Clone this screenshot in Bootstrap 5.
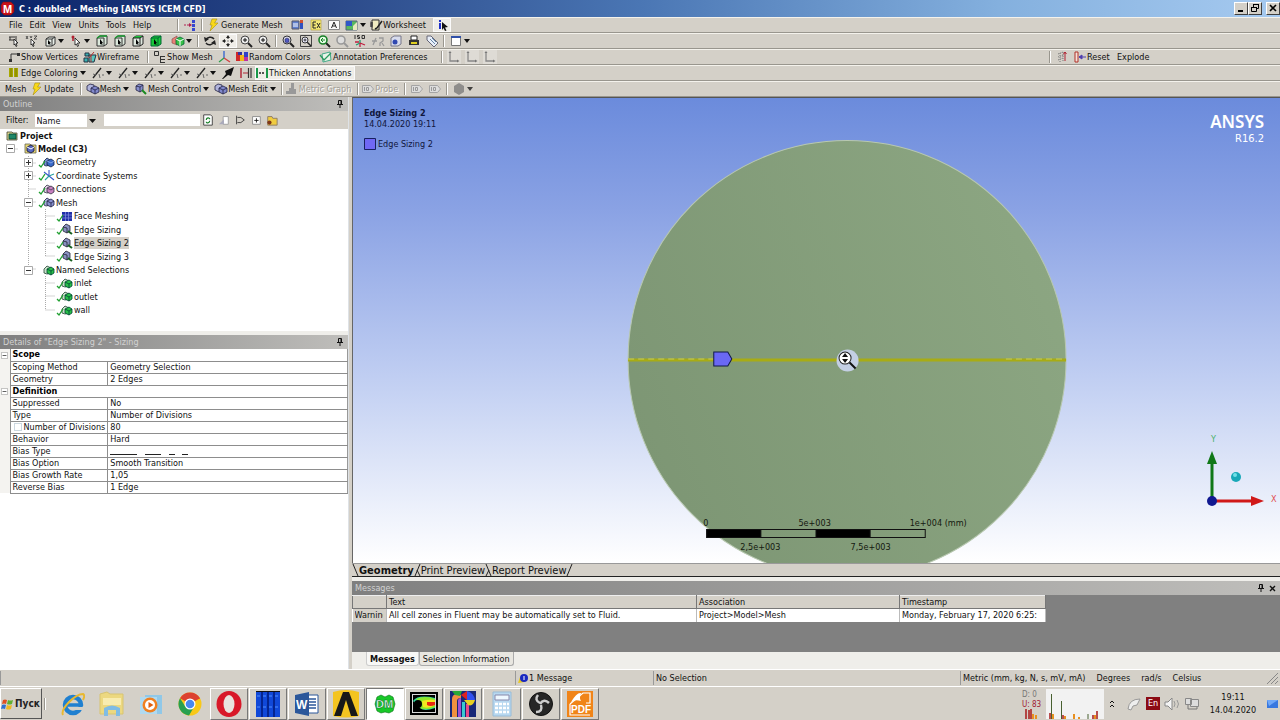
<!DOCTYPE html>
<html lang="en">
<head>
<meta charset="utf-8">
<meta name="viewport" content="width=device-width, initial-scale=1">
<title>C : doubled - Meshing [ANSYS ICEM CFD]</title>
<link href="https://cdn.jsdelivr.net/npm/bootstrap@5.3.0/dist/css/bootstrap.min.css" rel="stylesheet">
<style>
:root { --face:#d4d0c8; --ink:#111; --ui:"DejaVu Sans Condensed","Liberation Sans",sans-serif; }
body { font-family:var(--ui); font-size:9px; line-height:12px; color:var(--ink); background:var(--face); min-height:100vh; }
button, input, select { font:inherit; color:inherit; }
button { background:none; border:0; padding:0; white-space:nowrap; }
b, th, .fw-bold { font-weight:700; }
svg { display:block; flex:none; }
.toolrow, .titlebar, .status, .task { flex:none; }

.titlebar { height:17px; background:linear-gradient(90deg,#0a246a 0,#2a4888 25%,#4a76b4 50%,#84b0de 78%,#a6caf0 100%); color:#fff; font-weight:700; }
.winbtn { width:14px; height:13px; background:var(--face); border:1px solid; border-color:#fff #404040 #404040 #fff; color:#000; }

.toolrow { height:16px; border-top:1px solid #f4f2ec; border-bottom:1px solid #99968e; padding-left:5px; }
.tool { display:flex; align-items:center; height:14px; }
.tool > svg { margin:0 2px; }
.tool.drop::after { content:""; border:3px solid transparent; border-top:4px solid #111; border-bottom:0; margin:0 3px 0 2px; }
.tool.drop-tight::after { margin-left:-1px; }
.tool.down { background:#efede8; outline:1px solid #fafafa; outline-offset:-1px; }
.tool:disabled { color:#a09d95; text-shadow:1px 1px #fff; }
.rule-v { width:2px; height:12px; border-left:1px solid #99968e; border-right:1px solid #fff; margin:0 2px; flex:none; }
.menu { gap:7px; width:170px; padding-left:4px; }
.cw-42 { width:42px; } .cw-64 { width:64px; } .cw-76 { width:76px; } .cw-84 { width:84px; } .cw-100 { width:100px; } .cw-122 { width:122px; } .cw-163 { width:163px; }

.side { flex:0 0 349px; }
.panel-head { height:14px; color:#d2d2d2; background:linear-gradient(90deg,#7f7f7f,#bfbebb); padding:0 4px 0 3px; }
.outline { height:234px; }
.filter { height:18px; background:var(--face); padding-left:6px; }
.filter select { width:64px; height:13px; border:0; background:#fff; appearance:none; padding:1px 2px; line-height:12px; }
.filter input { width:96px; height:12px; border:0; background:#fff; padding:0; margin-left:5px; }
.pick { width:64px; margin-left:6px; }
.pick svg { position:absolute; right:0; top:0; pointer-events:none; }
.tree { height:188px; }
.tree-lines { position:absolute; left:0; top:0; }
.tree-row { height:13px; }
.lv0 { padding-left:2px; } .lv1 { padding-left:6px; } .lv2 { padding-left:24px; } .lv3 { padding-left:42px; }
.twist { width:14px; flex:none; }
.twist button { display:block; width:9px; height:9px; background:#fff; }
.picked { background:#d4d0c8; }

.props { width:100%; border-collapse:collapse; background:#fff; border-right:1px solid #999; }
.props td, .props th { height:12px; line-height:11px; padding:0 2px; border-bottom:1px solid #8d8d8d; white-space:nowrap; }
.props .gut { width:10px; padding:0; border-bottom:0; border-right:1px solid #8d8d8d; background:#f4f3f0; }
.props .nm { width:96px; border-right:1px solid #8d8d8d; }
.props th { color:#000; }
.props input { appearance:none; width:8px; height:8px; border:1px solid #ccd8e0; background:#fff; margin:0 2px 0 1px; vertical-align:-1px; }
.gut button { display:block; width:7px; height:7px; margin:2px 1px; }

.work { min-width:0; margin-left:3px; }
.scene { background:linear-gradient(180deg,#6b8bdc 0,#8aa2e4 24%,#c0cef2 60%,#fff 100%); border-left:1px solid #666; border-top:1px solid #555; min-height:200px; }
.scene > svg.model { position:absolute; inset:0; width:100%; height:100%; }
.scene > svg.triad { position:absolute; right:0; bottom:44px; width:76px; height:80px; overflow:visible; }
.over { position:absolute; color:#10163c; }
.cap { left:11px; top:10px; line-height:11px; }
.legend { gap:2px; }
.brand { right:16px; top:14px; color:#fff; text-align:right; }
.brand div { font:600 17px/20px "Noto Sans","Open Sans",sans-serif; }
.brand small { display:block; font:11px/13px "DejaVu Sans Condensed",sans-serif; }
.viewtabs { height:14px; border-top:1px solid #999; border-bottom:1px solid #222; font-size:11px; }
.viewtabs button { height:13px; line-height:13px; flex:none; }
.msgs { height:71px; background:#808080; }
.msgs table { border-collapse:collapse; background:#fff; table-layout:fixed; width:693px; }
.msgs th { background:var(--face); font-weight:400; height:13px; border:1px solid #777; border-top-color:#eee; padding:0 2px; }
.msgs td { height:13px; padding:0 2px; border-right:1px solid #bbb; white-space:nowrap; overflow:hidden; }
.msgs td.rowh { background:var(--face); }
.clip { width:28px; overflow:hidden; }
.msgtabs { height:17px; background:#efeeea; padding-left:14px; }
.msgtabs button { height:14px; background:#e8e6e0; border:1px solid #aaa; border-top:0; border-radius:0 0 3px 3px; padding:0 3px; line-height:14px; flex:none; }
.msgtabs .cur { background:#f8f8f6; border-color:#ccc; }
.splitter { background:#efeeea; }
.status { height:17px; border-top:1px solid #fff; }
.status > div { border-left:1px solid #999; padding:0 2px; height:14px; line-height:14px; }
.stat-m { width:138px; } .stat-s { width:307px; } .stat-u { width:320px; gap:11px; }
.task { height:34px; border-top:1px solid #fff; }
.start { width:42px; height:31px; font-size:10px; font-weight:700; color:#222; border:1px solid; border-color:#fff #555 #555 #fff; }
.app { width:38px; height:32px; border:1px solid transparent; margin-right:1px; display:flex; align-items:center; justify-content:center; flex:none; }
.app.run { border-color:#fff #777 #777 #fff; }
.app.act { background:#fff; border-color:#777 #fff #fff #777; }
.lang { width:14px; height:13px; background:#8c0b14; color:#fff; text-align:center; line-height:13px; }
.netmon { width:86px; height:30px; }
.clock { width:66px; line-height:13px; }
</style>
</head>
<body class="d-flex flex-column overflow-hidden">

<svg width="0" height="0" class="position-absolute" aria-hidden="true">
  <defs>
    <symbol id="bolt" viewBox="0 0 14 14"><path d="M5 1h5L7.500 5H11L3 13l2-6H3z" fill="#f8d818" stroke="#a89010" stroke-width=".6"/></symbol>
    <symbol id="cube" viewBox="0 0 14 14"><path d="M3 5l3-2h6v7l-3 2H3z" fill="#e8eee8" stroke="#333"/><path d="M3 5h6v7M9 5l3-2" fill="none" stroke="#333"/><path d="M5 6l3 3-1 .3.6 1.500-.8.3L6.200 9.700 5 10.500z" fill="#000"/></symbol>
    <symbol id="cubeg" viewBox="0 0 14 14"><path d="M2 4l3-2h7v8l-3 2H2z" fill="#dce8dc" stroke="#333"/><path d="M2 4h7v8" fill="none" stroke="#333"/><path d="M2 4l3-2h7" fill="none" stroke="#1a9a30" stroke-width="1.300"/><path d="M5 5l3 4-1 .3.6 1.500-.8.3L6.200 9.700 5 10.500z" fill="#000"/></symbol>
    <symbol id="cubef" viewBox="0 0 14 14"><path d="M2 4l3-2h7v8l-3 2H2z" fill="#18c838" stroke="#063"/><path d="M2 4h7v8M9 4l3-2" fill="none" stroke="#063"/><path d="M5 5l3 4-1 .3.6 1.500-.8.3L6.200 9.700 5 10.500z" fill="#000"/></symbol>
    <symbol id="cubet" viewBox="0 0 14 14"><path d="M2 4l3-2h7v8l-3 2H2z" fill="#dfe8df" stroke="#222"/><path d="M2 4l3-2h7L9 4z" fill="#18c838"/><path d="M2 4h7v8M9 4l3-2" fill="none" stroke="#222"/><path d="M5 5l3 4-1 .3.6 1.500-.8.3L6.200 9.700 5 10.500z" fill="#000"/></symbol>
    <symbol id="mesh" viewBox="0 0 14 14"><path d="M1 4l3-2 4 1v5l-3 2-4-2z" fill="#b0b4dc" stroke="#224" stroke-width=".8"/><path d="M5 6l4-2 4 2v4l-4 2-4-2z" fill="#8088cc" stroke="#224" stroke-width=".8"/><path d="M5 6l4 2 4-2M9 8v4" stroke="#224" stroke-width=".8" fill="none"/></symbol>
    <symbol id="meshc" viewBox="0 0 14 14"><path d="M2 4l3-2 4 1v5l-3 2-4-2z" fill="#8890cc" stroke="#224" stroke-width=".8"/><path d="M2 4l4 1v5M6 5l3-2" stroke="#224" stroke-width=".8" fill="none"/><path d="M8 8l4 4" stroke="#1a8a20" stroke-width="2"/></symbol>
    <symbol id="rgcube" viewBox="0 0 14 14"><path d="M1 5l5-3v9l-5-2z" fill="#e88078" stroke="#844" stroke-width=".6"/><path d="M5 5l4-2 4 2v5l-4 2-4-2z" fill="#38c048" stroke="#063" stroke-width=".8"/><path d="M5 5l4 2 4-2M9 7v5" stroke="#fff" fill="none"/></symbol>
    <symbol id="ptr1" viewBox="0 0 14 14"><path d="M2 3h8M2 6h5M9 4v4M3 3v3" stroke="#333" fill="none"/><path d="M7 5l4 4H9l1 3-1 .5L8 10l-1 1z" fill="#fff" stroke="#111" stroke-width=".8"/></symbol>
    <symbol id="ptr2" viewBox="0 0 14 14"><path d="M1 2l2 3M3 2L1 5M5 2l1 2 1-2M9 2h3L9 5h3" stroke="#333" fill="none" stroke-width=".8"/><path d="M6 5l4 4H8l1 3-1 .5L7 10l-1 1z" fill="#fff" stroke="#111" stroke-width=".8"/></symbol>
    <symbol id="ptr3" viewBox="0 0 14 14"><path d="M4 2v5" stroke="#b02030" stroke-width="1.500"/><circle cx="4" cy="3" r="1.500" fill="#b02030"/><path d="M6 4l5 5H8.500l1 3-1 .5L7.500 10 6 11z" fill="#fff" stroke="#111" stroke-width=".8"/></symbol>
    <symbol id="rot" viewBox="0 0 14 14"><path d="M3 6c1-3 6-4 8-1M11 8c-1 3-6 4-8 1" fill="none" stroke="#222" stroke-width="1.400"/><path d="M1 3l1 5 4-3zM13 11l-1-5-4 3z" fill="#222"/></symbol>
    <symbol id="pan" viewBox="0 0 14 14"><path d="M7 1l2 3H5zM7 13l2-3H5zM1 7l3-2v4zM13 7l-3-2v4z" fill="#222"/><path d="M7 4v1M7 9v1M4 7h1M9 7h1M6.500 7h1" stroke="#222"/></symbol>
    <symbol id="mag" viewBox="0 0 14 14"><path d="M9 9l4 4" stroke="#222" stroke-width="2"/><circle cx="6" cy="6" r="4" fill="#eee" stroke="#444"/><path d="M4 6h4M6 4v4" stroke="#111"/></symbol>
    <symbol id="magb" viewBox="0 0 14 14"><path d="M9 9l4 4" stroke="#222" stroke-width="2"/><circle cx="6" cy="6" r="4" fill="#dde" stroke="#333"/><path d="M4 5l2-1 2 1v3L6 9 4 8z" fill="#5058c0" stroke="#224" stroke-width=".5"/></symbol>
    <symbol id="magr" viewBox="0 0 14 14"><path d="M1.500 1.500h11v11h-11z" fill="none" stroke="#444"/><path d="M8 8l4 4" stroke="#222" stroke-width="1.500"/><circle cx="6" cy="6" r="3" fill="#eef" stroke="#333"/><path d="M4.500 6h3M6 4.500v3" stroke="#111" stroke-width=".8"/></symbol>
    <symbol id="magg" viewBox="0 0 14 14"><path d="M9 9l4 4" stroke="#222" stroke-width="2"/><circle cx="6" cy="6" r="4" fill="#e8ffe8" stroke="#188028" stroke-width="1.600"/><path d="M4 6h4M4 6l2-2M4 6l2 2" stroke="#188028"/></symbol>
    <symbol id="magx" viewBox="0 0 14 14"><path d="M9 9l4 4" stroke="#999" stroke-width="2"/><circle cx="6" cy="6" r="4" fill="#ddd" stroke="#999" stroke-width="1.600"/></symbol>
    <symbol id="iso" viewBox="0 0 14 14"><path d="M2 1v4M6.500 1.500H4.500v1.500h2v1.500h-2M9 1.500h2.500v3H9z" fill="none" stroke="#222" stroke-width=".9"/><path d="M7 9V6M7 9l-4 2" stroke="#18a070" stroke-width="1.300" fill="none"/><path d="M7 9l5 2M7 9v4M2 8h4" stroke="#c02040" stroke-width="1.300"/></symbol>
    <symbol id="look" viewBox="0 0 14 14"><path d="M2 11l3-7M1 7h5M8 4h4v3L9 9v3M11 9l2 3" fill="none" stroke="#999" stroke-width="1.300"/></symbol>
    <symbol id="box3" viewBox="0 0 14 14"><path d="M2 4l3-2h7v8l-3 2H2z" fill="#d8dcec" stroke="#778"/><circle cx="6" cy="8" r="2.500" fill="#3048b0"/></symbol>
    <symbol id="prn" viewBox="0 0 14 14"><path d="M4 2h6v4H4z" fill="#fff" stroke="#222"/><path d="M2 6h10v5H2z" fill="#333"/><path d="M4 8h6v2H4z" fill="#e0d020"/></symbol>
    <symbol id="tag" viewBox="0 0 14 14"><path d="M2 2l4 0 7 7-4 4-7-7z" fill="#e8eef8" stroke="#667"/><path d="M5 5l5 5M7 4l4 4" stroke="#68a"/></symbol>
    <symbol id="win" viewBox="0 0 14 14"><path d="M2.500 2.500h9v9h-9z" fill="#fff" stroke="#777"/><path d="M2 2h10v2H2z" fill="#3050a8"/></symbol>
    <symbol id="conn" viewBox="0 0 14 14"><path d="M1 7h6" stroke="#b02050" stroke-dasharray="2 1"/><path d="M6 5l3 2-3 2z" fill="#b02050"/><path d="M9 2h3v3H9zM9 6h3v3H9zM9 10h3v3H9z" fill="#3848d0"/></symbol>
    <symbol id="sheet" viewBox="0 0 14 14"><path d="M1 3h7v8H1z" fill="#6080d0" stroke="#556"/><path d="M2 6h5M2 8h5" stroke="#fff"/><path d="M9 2h3v9H9z" fill="#3050c0"/><path d="M9 2h3v3H9z" fill="#d05030"/></symbol>
    <symbol id="exc" viewBox="0 0 14 14"><path d="M2 2h10v10H2z" fill="#f4e878" stroke="#b8a840" stroke-width=".7"/><path d="M7 4H4v6h3M4 7h2.500M8 5l3 5M11 5l-3 5" stroke="#222" fill="none"/></symbol>
    <symbol id="note" viewBox="0 0 14 14"><path d="M1.500 2.500h11v9h-11z" fill="#fafafa" stroke="#888"/><path d="M4.500 10L7 4l2.500 6M5.500 8h3" fill="none" stroke="#222"/></symbol>
    <symbol id="pic" viewBox="0 0 14 14"><path d="M1 3h11v9H1z" fill="#58b860" stroke="#567"/><path d="M1 3h6v5H1z" fill="#3058c8"/><path d="M8 8l4-4v8H8z" fill="#e8e8c0"/></symbol>
    <symbol id="wsheet" viewBox="0 0 14 14"><path d="M3 2h7v10H3z" fill="#f0ecc0" stroke="#333"/><path d="M13 3L8 10l-2 1" stroke="#222" stroke-width="1.500" fill="none"/><path d="M1 4l3 1-3 1 3 1-3 1 3 1" stroke="#333" fill="none" stroke-width=".8"/></symbol>
    <symbol id="info" viewBox="0 0 14 14"><path d="M4 2h2v2H4zM4 5h2v6H4z" fill="#2030c8"/><path d="M7 4l6 5-3 .5 1.500 3-1.500.5-1.500-3L7 12z" fill="#111"/></symbol>
    <symbol id="vert" viewBox="0 0 14 14"><path d="M4 10V4h7" fill="none" stroke="#333"/><path d="M2 9h3v3H2zM10 3h3v3h-3z" fill="#333"/></symbol>
    <symbol id="wire" viewBox="0 0 14 14"><path d="M2 3h4v3H2zM1 8h4v4H1z" fill="#38b0b0" stroke="#234"/><path d="M6 5h7l-2 7H6z" fill="#58c8c0" stroke="#234"/><path d="M8 5v7M11 2L6 8" stroke="#b03030"/></symbol>
    <symbol id="smesh" viewBox="0 0 14 14"><path d="M1.500 1.500h4v4h-4zM7 6.500h5M7 9.500h5M7 12.500h5M7.500 6v6" fill="none" stroke="#333"/></symbol>
    <symbol id="axes" viewBox="0 0 14 14"><path d="M7 8V1" stroke="#3060d0" stroke-width="1.300"/><path d="M7 8l-5 4" stroke="#28a048" stroke-width="1.300"/><path d="M7 8l6 4" stroke="#d04040" stroke-width="1.300"/></symbol>
    <symbol id="rnd" viewBox="0 0 14 14"><path d="M1 2h4v9H1z" fill="#d02828"/><path d="M5 5h4v6H5z" fill="#f0b818"/><path d="M9 2h4v5H9z" fill="#3040c8"/><path d="M9 7h4v4H9z" fill="#c030a0"/><path d="M3 2h4v3H3z" fill="#3030a0"/></symbol>
    <symbol id="anno" viewBox="0 0 14 14"><path d="M3 4l8-2 1 8-8 2z" fill="#e8f4e8" stroke="#4a8"/><path d="M1 5l4 5 7-7" fill="none" stroke="#2a9a60" stroke-width="1.300"/></symbol>
    <symbol id="ax2" viewBox="0 0 14 14"><path d="M0 0h14v14H0z" fill="#dedbd5"/><path d="M3 2v9h8" fill="none" stroke="#888" stroke-width="1.300"/><path d="M1.500 3L3 1l1.500 2zM10 9.500l2.500 1.500L10 12.500z" fill="#777"/></symbol>
    <symbol id="expl" viewBox="0 0 14 14"><path d="M3 4l5-2M3 7l6-2M3 10l5-2M5 3v9M8 2v9" stroke="#777" stroke-dasharray="1 1"/><path d="M10 2v9M8.500 4L10 2l1.500 2" stroke="#b02030" fill="none"/></symbol>
    <symbol id="reset" viewBox="0 0 14 14"><path d="M2 2h3v10H2z" fill="#f4e0d8" stroke="#b03028"/><path d="M6 7h7M6 7l3-2v4z" stroke="#5040b0" fill="#5040b0"/></symbol>
    <symbol id="ecol" viewBox="0 0 14 14"><path d="M2 2h4v9H2zM7 2h4v9H7z" fill="#a8a800"/><path d="M9 2v9M4 2v9" stroke="#7c7c00"/></symbol>
    <symbol id="edge" viewBox="0 0 14 14"><path d="M2 12L10 2" stroke="#222" stroke-width="1.300"/><path d="M2 8l3 1M8 8l1 4M11 9h2" fill="none" stroke="#666"/></symbol>
    <symbol id="barrow" viewBox="0 0 14 14"><path d="M1 13l4-5-1-3 9-4-3 9-3-1-5 4z" fill="#111"/></symbol>
    <symbol id="thk" viewBox="0 0 14 14"><path d="M2 2v10" stroke="#b02838" stroke-width="1.500"/><path d="M4 7h5" stroke="#b02838"/><path d="M9.500 2v10M12 2v10" stroke="#333" stroke-width="1.200"/></symbol>
    <symbol id="thkg" viewBox="0 0 14 14"><path d="M2 2v10M12 2v10" stroke="#189848" stroke-width="2"/><path d="M4 7h6" stroke="#222" stroke-dasharray="2 1" stroke-width="1.500"/></symbol>
    <symbol id="graph" viewBox="0 0 14 14"><path d="M1 12v-3h3V6h2V1h3v6h2v5z" fill="#999"/></symbol>
    <symbol id="probe" viewBox="0 0 14 14"><path d="M1.500 3.500h8l3 3.500-3 3.500h-8z" fill="#ddd" stroke="#a4a4a4"/><path d="M3.500 5v4M5.500 5.500h2v3h-2z" stroke="#999" fill="none"/></symbol>
    <symbol id="hex" viewBox="0 0 14 14"><path d="M7 1l5 3v6l-5 3-5-3V4z" fill="#777"/></symbol>
    <symbol id="pin" viewBox="0 0 8 8"><path d="M2.500.5h3v4h-3zM1 4.500h6M4 5v3" stroke="#111" fill="none"/><path d="M4.500 1h1v3h-1z" fill="#111"/></symbol>
    <symbol id="plus" viewBox="0 0 9 9"><path d="M.5.5h8v8h-8z" fill="#fff" stroke="#aaa"/><path d="M2 4.500h5M4.500 2v5" stroke="#333"/></symbol>
    <symbol id="minus" viewBox="0 0 9 9"><path d="M.5.5h8v8h-8z" fill="#fff" stroke="#aaa"/><path d="M2 4.500h5" stroke="#333"/></symbol>
    <symbol id="t-proj" viewBox="0 0 18 13"><path d="M5 3h5l1 1h4v7H5z" fill="#e0d890" stroke="#443" stroke-width=".8"/><path d="M7 5h7v5H7z" fill="#208868" stroke="#043" stroke-width=".8"/></symbol>
    <symbol id="t-model" viewBox="0 0 18 13"><path d="M5 2h5l1 1h5v8H5z" fill="#e8d870" stroke="#665" stroke-width=".8"/><path d="M7 5l4-2 3 2v4l-3 2-4-2z" fill="#5868c0" stroke="#113" stroke-width=".8"/><path d="M7 5l4 2 3-2" stroke="#fff" fill="none"/></symbol>
    <symbol id="tick" viewBox="0 0 18 13"><path d="M1 9l2 2 4-6" stroke="#20a030" stroke-width="1.300" fill="none"/></symbol>
    <symbol id="t-geo" viewBox="0 0 18 13"><path d="M6 5l3-3 3 2v5l-4 1-2-1z" fill="#7890d0" stroke="#124" stroke-width=".8"/><path d="M9 5l4-2 3 2v4l-3 2-4-2z" fill="#3868c8" stroke="#124" stroke-width=".8"/><path d="M9 5l4 2 3-2" stroke="#a8c0f0" stroke-width=".7" fill="none"/><use href="#tick"/></symbol>
    <symbol id="t-cs" viewBox="0 0 18 13"><path d="M11 7V1M11 7l5 4M11 7L6 3" stroke="#3858c8" stroke-width="1.100"/><path d="M11 7l-4 4M11 7l5-2" stroke="#28a0a0" stroke-width="1.100"/><use href="#tick"/></symbol>
    <symbol id="t-con" viewBox="0 0 18 13"><path d="M6 5l3-3 4 2v5l-4 1-3-1z" fill="#e0d0e4" stroke="#334" stroke-width=".8"/><path d="M9 5l4-2 3 2v4l-3 2-4-2z" fill="#c880c0" stroke="#334" stroke-width=".8"/><path d="M9 5l4 2 3-2" stroke="#334" stroke-width=".7" fill="none"/><use href="#tick"/></symbol>
    <symbol id="t-mesh" viewBox="0 0 18 13"><path d="M6 5l3-3 3 2v5l-4 1-2-1z" fill="#a8b0d8" stroke="#224" stroke-width=".8"/><path d="M9 5l4-2 3 2v4l-3 2-4-2z" fill="#8890d0" stroke="#224" stroke-width=".8"/><path d="M9 5l4 2 3-2M13 7v4" stroke="#224" stroke-width=".8" fill="none"/><use href="#tick"/></symbol>
    <symbol id="t-face" viewBox="0 0 18 13"><path d="M6 2h10v9H6z" fill="#2030a8"/><path d="M9.500 2v9M12.500 2v9M6 5h10M6 8h10" stroke="#8890e0" stroke-width=".7"/><use href="#tick"/></symbol>
    <symbol id="t-edge" viewBox="0 0 18 13"><path d="M7 4l3-3 4 2v5l-3 2-4-2z" fill="#8890c0" stroke="#223" stroke-width=".8"/><path d="M7 4l4 1v5" stroke="#223" stroke-width=".8" fill="none"/><path d="M12 8l4 3" stroke="#186020" stroke-width="2"/><use href="#tick"/></symbol>
    <symbol id="t-ns" viewBox="0 0 18 13"><path d="M6 5l3-3 4 2v5l-4 1-3-1z" fill="#c8e0c8" stroke="#243" stroke-width=".8"/><path d="M9 5l4-2 3 2v4l-3 2-4-2z" fill="#28c048" stroke="#043" stroke-width=".8"/><path d="M9 5l4 2 3-2M13 7v4" stroke="#043" stroke-width=".8" fill="none"/></symbol>
    <symbol id="t-nsc" viewBox="0 0 18 13"><use href="#t-ns"/><use href="#tick"/></symbol>
  </defs>
</svg>

<header class="titlebar d-flex align-items-center">
  <svg width="15" height="15" viewBox="0 0 15 15"><path d="M3 1h8l3 3v7l-3 3H4l-3-3V4z" fill="#c81018" stroke="#701018" stroke-width=".6"/><text x="3" y="12" font-family="Liberation Sans, sans-serif" font-size="11" font-weight="700" fill="#fff">M</text></svg>
  <span class="px-1 flex-grow-1">C : doubled - Meshing [ANSYS ICEM CFD]</span>
  <button class="winbtn" aria-label="Minimize"><svg width="12" height="11" viewBox="0 0 12 11"><path d="M3 8h5" stroke="#000" stroke-width="2"/></svg></button>
  <button class="winbtn" aria-label="Restore"><svg width="12" height="11" viewBox="0 0 12 11"><path d="M4.500 4V1.500h5v4H8M2.500 4.500h5v4h-5zM2 4.500h6M4 1.500h6" fill="none" stroke="#000"/></svg></button>
  <button class="winbtn ms-1" aria-label="Close"><svg width="12" height="11" viewBox="0 0 12 11"><path d="M3 2l6 6M9 2L3 8" stroke="#000" stroke-width="1.600"/></svg></button>
</header>

<nav class="toolrow d-flex align-items-center" aria-label="Menu">
  <div class="menu d-flex">
    <button>File</button><button>Edit</button><button>View</button><button>Units</button><button>Tools</button><button>Help</button>
  </div>
  <span class="rule-v"></span>
  <button class="tool" aria-label="Connect"><svg width="14" height="14"><use href="#conn"/></svg></button>
  <span class="rule-v"></span>
  <button class="tool cw-84"><svg width="14" height="14" class="me-0"><use href="#bolt"/></svg>Generate Mesh</button>
  <button class="tool" aria-label="Sheet"><svg width="14" height="14"><use href="#sheet"/></svg></button>
  <button class="tool" aria-label="Comment"><svg width="14" height="14"><use href="#exc"/></svg></button>
  <button class="tool" aria-label="Note"><svg width="14" height="14"><use href="#note"/></svg></button>
  <button class="tool drop drop-tight" aria-label="Image"><svg width="14" height="14"><use href="#pic"/></svg></button>
  <button class="tool cw-64"><svg width="14" height="14" class="mx-0"><use href="#wsheet"/></svg>Worksheet</button>
  <button class="tool down" aria-label="Selection information"><svg width="14" height="14"><use href="#info"/></svg></button>
</nav>

<div class="toolrow d-flex align-items-center" role="toolbar" aria-label="Graphics">
  <button class="tool" aria-label="Label"><svg width="14" height="14"><use href="#ptr1"/></svg></button>
  <button class="tool" aria-label="Coordinates"><svg width="14" height="14"><use href="#ptr2"/></svg></button>
  <button class="tool drop drop-tight" aria-label="Select type"><svg width="14" height="14"><use href="#cube"/></svg></button>
  <button class="tool drop drop-tight" aria-label="Select mode"><svg width="14" height="14"><use href="#ptr3"/></svg></button>
  <button class="tool" aria-label="Vertex"><svg width="14" height="14"><use href="#cubeg"/></svg></button>
  <button class="tool" aria-label="Edge"><svg width="14" height="14"><use href="#cubeg"/></svg></button>
  <button class="tool" aria-label="Face"><svg width="14" height="14"><use href="#cubet"/></svg></button>
  <button class="tool me-1" aria-label="Body"><svg width="14" height="14"><use href="#cubef"/></svg></button>
  <button class="tool drop drop-tight" aria-label="Extend"><svg width="14" height="14"><use href="#rgcube"/></svg></button>
  <span class="rule-v"></span>
  <button class="tool" aria-label="Rotate"><svg width="14" height="14"><use href="#rot"/></svg></button>
  <button class="tool down" aria-label="Pan"><svg width="14" height="14"><use href="#pan"/></svg></button>
  <button class="tool" aria-label="Zoom"><svg width="14" height="14"><use href="#mag"/></svg></button>
  <button class="tool" aria-label="Box zoom"><svg width="14" height="14"><use href="#mag"/></svg></button>
  <span class="rule-v"></span>
  <button class="tool" aria-label="Fit"><svg width="14" height="14"><use href="#magb"/></svg></button>
  <button class="tool" aria-label="Magnifier"><svg width="14" height="14"><use href="#magr"/></svg></button>
  <button class="tool" aria-label="Previous view"><svg width="14" height="14"><use href="#magg"/></svg></button>
  <button class="tool" aria-label="Next view"><svg width="14" height="14"><use href="#magx"/></svg></button>
  <button class="tool" aria-label="Isometric"><svg width="14" height="14"><use href="#iso"/></svg></button>
  <button class="tool" aria-label="Look at"><svg width="14" height="14"><use href="#look"/></svg></button>
  <button class="tool" aria-label="Views"><svg width="14" height="14"><use href="#box3"/></svg></button>
  <button class="tool" aria-label="Rescale"><svg width="14" height="14"><use href="#prn"/></svg></button>
  <button class="tool" aria-label="Tag"><svg width="14" height="14"><use href="#tag"/></svg></button>
  <span class="rule-v"></span>
  <button class="tool drop drop-tight" aria-label="Viewports"><svg width="14" height="14"><use href="#win"/></svg></button>
</div>

<div class="toolrow d-flex align-items-center" role="toolbar" aria-label="Display">
  <button class="tool cw-76"><svg width="14" height="14" class="me-0"><use href="#vert"/></svg>Show Vertices</button>
  <button class="tool cw-64"><svg width="14" height="14" class="me-0"><use href="#wire"/></svg>Wireframe</button>
  <span class="rule-v"></span>
  <button class="tool cw-64"><svg width="14" height="14" class="me-0"><use href="#smesh"/></svg>Show Mesh</button>
  <button class="tool" aria-label="Axes"><svg width="14" height="14"><use href="#axes"/></svg></button>
  <button class="tool cw-84"><svg width="14" height="14" class="me-0"><use href="#rnd"/></svg>Random Colors</button>
  <button class="tool cw-122"><svg width="14" height="14" class="me-0"><use href="#anno"/></svg>Annotation Preferences</button>
  <span class="rule-v"></span>
  <button class="tool" aria-label="X view"><svg width="14" height="14"><use href="#ax2"/></svg></button>
  <button class="tool" aria-label="Y view"><svg width="14" height="14"><use href="#ax2"/></svg></button>
  <button class="tool" aria-label="Z view"><svg width="14" height="14"><use href="#ax2"/></svg></button>
  <div class="d-flex align-items-center ms-auto">
    <span class="rule-v"></span>
    <button class="tool" aria-label="Explode view"><svg width="14" height="14"><use href="#expl"/></svg></button>
    <button class="tool cw-42 me-1"><svg width="14" height="14" class="me-0"><use href="#reset"/></svg>Reset</button>
    <button class="tool cw-163">Explode</button>
  </div>
</div>

<div class="toolrow d-flex align-items-center" role="toolbar" aria-label="Edges">
  <button class="tool drop cw-84"><svg width="14" height="14" class="me-0"><use href="#ecol"/></svg>Edge Coloring</button>
  <button class="tool drop drop-tight" aria-label="Free edges"><svg width="14" height="14"><use href="#edge"/></svg></button>
  <button class="tool drop drop-tight" aria-label="Single edges"><svg width="14" height="14"><use href="#edge"/></svg></button>
  <button class="tool drop drop-tight" aria-label="Double edges"><svg width="14" height="14"><use href="#edge"/></svg></button>
  <button class="tool drop drop-tight" aria-label="Triple edges"><svg width="14" height="14"><use href="#edge"/></svg></button>
  <button class="tool drop drop-tight" aria-label="Multiple edges"><svg width="14" height="14"><use href="#edge"/></svg></button>
  <button class="tool" aria-label="Direction"><svg width="14" height="14"><use href="#barrow"/></svg></button>
  <button class="tool" aria-label="Thickness"><svg width="14" height="14"><use href="#thk"/></svg></button>
  <button class="tool down cw-100"><svg width="14" height="14" class="mx-0"><use href="#thkg"/></svg>Thicken Annotations</button>
</div>

<div class="toolrow d-flex align-items-center" role="toolbar" aria-label="Mesh">
  <button class="tool pe-1">Mesh</button>
  <button class="tool me-1"><svg width="14" height="14" class="mx-0"><use href="#bolt"/></svg>Update</button>
  <span class="rule-v"></span>
  <button class="tool drop"><svg width="14" height="14" class="me-0"><use href="#mesh"/></svg>Mesh</button>
  <button class="tool drop"><svg width="14" height="14" class="me-0"><use href="#meshc"/></svg>Mesh Control</button>
  <button class="tool drop"><svg width="14" height="14" class="me-0"><use href="#mesh"/></svg>Mesh Edit</button>
  <span class="rule-v"></span>
  <button class="tool me-1" disabled><svg width="14" height="14" class="mx-0"><use href="#graph"/></svg>Metric Graph</button>
  <span class="rule-v"></span>
  <button class="tool me-1" disabled><svg width="14" height="14" class="mx-0"><use href="#probe"/></svg>Probe</button>
  <span class="rule-v"></span>
  <button class="tool" disabled aria-label="Max"><svg width="14" height="14"><use href="#probe"/></svg></button>
  <button class="tool" disabled aria-label="Min"><svg width="14" height="14"><use href="#probe"/></svg></button>
  <span class="rule-v"></span>
  <button class="tool drop drop-tight opacity-75" disabled aria-label="Section"><svg width="14" height="14"><use href="#hex"/></svg></button>
</div>

<main class="d-flex flex-grow-1">
  <aside class="side d-flex flex-column bg-white border-end">
    <section class="outline">
      <div class="panel-head d-flex align-items-center"><span class="flex-grow-1">Outline</span><svg width="8" height="8"><use href="#pin"/></svg></div>
      <div class="filter d-flex align-items-center">
        <label for="flt">Filter:</label>
        <div class="pick position-relative"><select id="flt"><option>Name</option></select><svg width="12" height="13" viewBox="0 0 12 13"><path d="M0 0h12v13H0z" fill="#d4d0c8"/><path d="M2 5h7L5.500 9z" fill="#111"/></svg></div>
        <input type="text" aria-label="Filter text">
        <button class="tool" aria-label="Refresh"><svg width="12" height="12" viewBox="0 0 14 14"><path d="M2 1h8l2 2v10H2z" fill="#fff" stroke="#333"/><path d="M5 7c0-3 4-3 4-1M9 8c0 3-4 3-4 1" fill="none" stroke="#188028" stroke-width="1.400"/></svg></button>
        <button class="tool" aria-label="Clear"><svg width="12" height="12" viewBox="0 0 14 14"><path d="M6 3h6v9H6z" fill="#fff" stroke="#999"/><path d="M1 12l6-6v6z" fill="#aab"/></svg></button>
        <button class="tool" aria-label="Tag filter"><svg width="12" height="12" viewBox="0 0 14 14"><path d="M3 2v10M4 4h4l4 3-4 3H4" fill="none" stroke="#333"/></svg></button>
        <button class="tool" aria-label="Expand"><svg width="12" height="12" viewBox="0 0 14 14"><path d="M3 3h9v9H3z" fill="#fff" stroke="#888"/><path d="M5 7.500h5M7.500 5v5" stroke="#111"/></svg></button>
        <button class="tool" aria-label="Folder"><svg width="12" height="12" viewBox="0 0 14 14"><path d="M2 3h5l1 2h5v8H2z" fill="#f0cc40" stroke="#876"/><circle cx="4" cy="10" r="2.500" fill="#803818"/></svg></button>
      </div>
      <div class="tree position-relative d-flex flex-column justify-content-between">
        <svg class="tree-lines" width="70" height="188" aria-hidden="true"><path d="M10.500 20h8M28.500 27v114M28.500 34h8M28.500 47h8M28.500 60h8M28.500 73h8M28.500 140h8M45.500 80v47M45.500 87h10M45.500 100h10M45.500 114h10M45.500 127h10M45.500 147v34M45.500 154h10M45.500 167h10M45.500 181h10" fill="none" stroke="#aaa" stroke-dasharray="1 1"/></svg>
        <div class="tree-row lv0 d-flex align-items-center position-relative"><svg width="18" height="13"><use href="#t-proj"/></svg><span class="fw-bold">Project</span></div>
        <div class="tree-row lv1 d-flex align-items-center position-relative"><div class="twist"><button aria-label="Collapse"><svg width="9" height="9"><use href="#minus"/></svg></button></div><svg width="18" height="13"><use href="#t-model"/></svg><span class="fw-bold">Model (C3)</span></div>
        <div class="tree-row lv2 d-flex align-items-center position-relative"><div class="twist"><button aria-label="Expand"><svg width="9" height="9"><use href="#plus"/></svg></button></div><svg width="18" height="13"><use href="#t-geo"/></svg><span>Geometry</span></div>
        <div class="tree-row lv2 d-flex align-items-center position-relative"><div class="twist"><button aria-label="Expand"><svg width="9" height="9"><use href="#plus"/></svg></button></div><svg width="18" height="13"><use href="#t-cs"/></svg><span>Coordinate Systems</span></div>
        <div class="tree-row lv2 d-flex align-items-center position-relative"><div class="twist"></div><svg width="18" height="13"><use href="#t-con"/></svg><span>Connections</span></div>
        <div class="tree-row lv2 d-flex align-items-center position-relative"><div class="twist"><button aria-label="Collapse"><svg width="9" height="9"><use href="#minus"/></svg></button></div><svg width="18" height="13"><use href="#t-mesh"/></svg><span>Mesh</span></div>
        <div class="tree-row lv3 d-flex align-items-center position-relative"><div class="twist"></div><svg width="18" height="13"><use href="#t-face"/></svg><span>Face Meshing</span></div>
        <div class="tree-row lv3 d-flex align-items-center position-relative"><div class="twist"></div><svg width="18" height="13"><use href="#t-edge"/></svg><span>Edge Sizing</span></div>
        <div class="tree-row lv3 d-flex align-items-center position-relative"><div class="twist"></div><svg width="18" height="13"><use href="#t-edge"/></svg><span class="picked">Edge Sizing 2</span></div>
        <div class="tree-row lv3 d-flex align-items-center position-relative"><div class="twist"></div><svg width="18" height="13"><use href="#t-edge"/></svg><span>Edge Sizing 3</span></div>
        <div class="tree-row lv2 d-flex align-items-center position-relative"><div class="twist"><button aria-label="Collapse"><svg width="9" height="9"><use href="#minus"/></svg></button></div><svg width="18" height="13"><use href="#t-ns"/></svg><span>Named Selections</span></div>
        <div class="tree-row lv3 d-flex align-items-center position-relative"><div class="twist"></div><svg width="18" height="13"><use href="#t-nsc"/></svg><span>inlet</span></div>
        <div class="tree-row lv3 d-flex align-items-center position-relative"><div class="twist"></div><svg width="18" height="13"><use href="#t-nsc"/></svg><span>outlet</span></div>
        <div class="tree-row lv3 d-flex align-items-center position-relative"><div class="twist"></div><svg width="18" height="13"><use href="#t-nsc"/></svg><span>wall</span></div>
      </div>
    </section>
    <section class="flex-grow-1">
      <div class="splitter pt-1"></div>
      <div class="panel-head d-flex align-items-center"><span class="flex-grow-1">Details of "Edge Sizing 2" - Sizing</span><svg width="8" height="8"><use href="#pin"/></svg></div>
      <table class="props">
        <tr><td class="gut"><button aria-label="Collapse"><svg width="7" height="7"><use href="#minus"/></svg></button></td><th colspan="2">Scope</th></tr>
        <tr><td class="gut"></td><td class="nm">Scoping Method</td><td>Geometry Selection</td></tr>
        <tr><td class="gut"></td><td class="nm">Geometry</td><td>2 Edges</td></tr>
        <tr><td class="gut"><button aria-label="Collapse"><svg width="7" height="7"><use href="#minus"/></svg></button></td><th colspan="2">Definition</th></tr>
        <tr><td class="gut"></td><td class="nm">Suppressed</td><td>No</td></tr>
        <tr><td class="gut"></td><td class="nm">Type</td><td>Number of Divisions</td></tr>
        <tr><td class="gut"></td><td class="nm"><input type="checkbox" id="nd"><label for="nd">Number of Divisions</label></td><td>80</td></tr>
        <tr><td class="gut"></td><td class="nm">Behavior</td><td>Hard</td></tr>
        <tr><td class="gut"></td><td class="nm">Bias Type</td><td><svg width="80" height="10" viewBox="0 0 80 10"><path d="M0 8.500h27M35 8.500h16M59 8.500h6M72 8.500h6" stroke="#222"/></svg></td></tr>
        <tr><td class="gut"></td><td class="nm">Bias Option</td><td>Smooth Transition</td></tr>
        <tr><td class="gut"></td><td class="nm">Bias Growth Rate</td><td>1,05</td></tr>
        <tr><td class="gut"></td><td class="nm">Reverse Bias</td><td>1 Edge</td></tr>
      </table>
    </section>
  </aside>

  <section class="d-flex flex-column flex-grow-1 work">
    <div class="scene position-relative flex-grow-1 overflow-hidden">
      <svg class="model" viewBox="0 0 926 464" preserveAspectRatio="xMidYMid slice" font-family="DejaVu Sans Condensed, Liberation Sans, sans-serif" font-size="9">
        <defs><linearGradient id="disc" x1="0" y1=".7" x2="1" y2=".3"><stop offset="0" stop-color="#7d9674"/><stop offset="1" stop-color="#8ca682"/></linearGradient></defs>
        <circle cx="493.500" cy="261" r="218.500" fill="url(#disc)" stroke="#b8c8b0"/>
        <path d="M275 261.500h437" stroke="#a8ac14" stroke-width="3"/>
        <path d="M275 260.500h85M652 260.500h60" stroke="#c4cc60" stroke-dasharray="6 4"/>
        <path d="M360.500 253.500h14l4 7-4 7h-14z" fill="#6a68f4" stroke="#101848"/>
        <circle cx="494" cy="262" r="11" fill="#c4cfe4"/>
        <path d="M496 264l6 6" stroke="#111" stroke-width="2"/><circle cx="491.500" cy="259.500" r="6" fill="#fff" stroke="#222"/>
        <path d="M491.500 254.500l3 4h-6zM491.500 264.500l3-4h-6z" fill="#111"/>
        <g stroke="#111"><path d="M353.500 430.500h218v8h-218z" fill="none"/><path d="M353.500 430.500h54v8h-54zM462.500 430.500h54v8h-54z" fill="#000"/></g>
        <g fill="#14180f"><text x="350" y="427">0</text><text x="445" y="427">5e+003</text><text x="556" y="427">1e+004 (mm)</text><text x="387" y="451">2,5e+003</text><text x="497" y="451">7,5e+003</text></g>
      </svg>
      <div class="over cap"><b>Edge Sizing 2</b><br>14.04.2020 19:11
        <div class="legend d-flex align-items-center mt-2"><svg width="12" height="12"><path d="M.5.5h11v11H.5z" fill="#7068f4" stroke="#182060"/></svg><span>Edge Sizing 2</span></div>
      </div>
      <div class="over brand"><div>ANSYS</div><small>R16.2</small></div>
      <svg class="triad" viewBox="0 0 76 80" font-family="DejaVu Sans Condensed, sans-serif" font-size="9">
        <path d="M8 62V24" stroke="#107818" stroke-width="3"/><path d="M8 12l5 13H3z" fill="#107818"/><path d="M8 62h40" stroke="#d01818" stroke-width="3"/><path d="M60 62l-13-5v10z" fill="#d01818"/>
        <circle cx="8" cy="62" r="5" fill="#101890"/><circle cx="32" cy="38" r="5" fill="#18a8b8"/><circle cx="31" cy="36" r="2" fill="#70e0e8"/>
        <text x="7" y="3" fill="#48b068">Y</text><text x="67" y="63" fill="#e05050">X</text>
      </svg>
    </div>
    <div class="viewtabs d-flex">
      <svg width="7" height="12"><path d="M1 0l5 12" stroke="#222"/></svg>
      <button class="fw-bold">Geometry</button><svg width="7" height="12"><path d="M1 12L6 0M3 6l3 6" stroke="#222" fill="none"/></svg>
      <button>Print Preview</button><svg width="7" height="12"><path d="M1 0l5 12M4 6L1 12" stroke="#222" fill="none"/></svg>
      <button>Report Preview</button><svg width="7" height="12"><path d="M1 12L6 0" stroke="#222"/></svg>
    </div>
    <div class="splitter pt-1"></div>
    <div class="msgs">
      <div class="panel-head d-flex align-items-center"><span class="flex-grow-1">Messages</span><svg width="8" height="8" class="me-1"><use href="#pin"/></svg><svg width="7" height="7"><path d="M1 1l5 5M6 1L1 6" stroke="#111" stroke-width="1.400"/></svg></div>
      <table>
        <colgroup><col width="34"><col width="310"><col width="203"><col width="146"></colgroup>
        <tr><th></th><th>Text</th><th>Association</th><th>Timestamp</th></tr>
        <tr><td class="rowh"><div class="clip">Warning</div></td><td>All cell zones in Fluent may be automatically set to Fluid.</td><td>Project&gt;Model&gt;Mesh</td><td>Monday, February 17, 2020 6:25:</td></tr>
      </table>
    </div>
    <div class="msgtabs d-flex"><button class="cur fw-bold">Messages</button><button>Selection Information</button></div>
  </section>
</main>

<footer class="status d-flex align-items-center">
  <div class="flex-grow-1"></div>
  <div class="stat-m d-flex align-items-center"><svg width="11" height="11"><path d="M0 10l2-6 5 5z" fill="#e8c820"/><circle cx="6" cy="5" r="4" fill="#1828c0"/><path d="M6 3v4" stroke="#fff"/></svg>1 Message</div>
  <div class="stat-s">No Selection</div>
  <div class="stat-u d-flex"><span>Metric (mm, kg, N, s, mV, mA)</span><span>Degrees</span><span>rad/s</span><span class="flex-grow-1">Celsius</span><svg width="12" height="14"><path d="M1 13L12 2M5 13l7-7M9 13l3-3" stroke="#888"/></svg></div>
</footer>

<footer class="task d-flex align-items-center">
  <button class="start d-flex align-items-center"><svg width="14" height="14" viewBox="0 0 14 14"><path d="M2 3q2-1 4 0L5 7Q3 6 1 7z" fill="#e05020"/><path d="M7 3q2 1 5 0l-1 4q-3 1-5 0z" fill="#60b030"/><path d="M1 8q2-1 4 0l-1 4q-2-1-4 0z" fill="#3070d0"/><path d="M6 8q2 1 5 0l-1 4q-3 1-5 0z" fill="#f0b820"/></svg>Пуск</button>
  <span class="rule-v me-2"></span>
  <button class="app" aria-label="Internet Explorer"><svg width="24" height="26" viewBox="0 0 24 26"><circle cx="12" cy="14" r="8" fill="none" stroke="#2080d0" stroke-width="4.500"/><path d="M6 14h14" stroke="#2080d0" stroke-width="3.500"/><path d="M14 17.500h9v-2" stroke="#d4d0c8" stroke-width="3" fill="none"/><path d="M2 24C-1 18 14 3 22 3c2 1 1 4 0 6" stroke="#e8b830" stroke-width="2" fill="none"/></svg></button>
  <button class="app" aria-label="Explorer"><svg width="26" height="26" viewBox="0 0 26 26"><path d="M1 3l7-2 3 2h13v20H1z" fill="#ecd880" stroke="#d8c470"/><path d="M4 7h18v7H4z" fill="#f8ecb0"/><path d="M5 25v-8q8-5 16 0v8h-4v-6H9v6z" fill="#80bce4"/></svg></button>
  <button class="app" aria-label="Media Player"><svg width="24" height="24" viewBox="0 0 24 24"><path d="M6 3h17v19H6z" fill="#90c8e8"/><path d="M1 5h17v17H1z" fill="#b0daf0"/><circle cx="11" cy="13" r="7.500" fill="#f08020"/><circle cx="11" cy="13" r="5" fill="#fff"/><path d="M9.500 10l5 3-5 3z" fill="#e06010"/></svg></button>
  <button class="app" aria-label="Chrome"><svg width="24" height="24" viewBox="0 0 24 24"><circle cx="12" cy="12" r="11.500" fill="#f8c818"/><path d="M12 12L2 6.300A11.500 11.500 0 0 1 22 6.300z" fill="#dc4030"/><path d="M2 6.300A11.500 11.500 0 0 0 11 23.500L16 15 12 12 7 14z" fill="#28a050"/><path d="M12 6.500h10.200L20 5H6z" fill="#dc4030"/><circle cx="12" cy="12" r="5.500" fill="#fff"/><circle cx="12" cy="12" r="4.300" fill="#4888f0"/></svg></button>
  <button class="app run" aria-label="Opera"><svg width="28" height="28" viewBox="0 0 28 28"><ellipse cx="14" cy="14" rx="12.500" ry="13" fill="#d81828"/><ellipse cx="14" cy="14" rx="5.500" ry="9" fill="#e8e4de"/></svg></button>
  <button class="app run" aria-label="Archive"><svg width="28" height="28" viewBox="0 0 28 28"><path d="M2 1h24v26H2z" fill="#1048d8"/><path d="M8 2v25M14 2v25M20 2v25" stroke="#001878" stroke-width="1.500"/><path d="M3 6h22M3 17h22" stroke="#5090ff" stroke-dasharray="3 3"/><path d="M2 1h24v1H2z" fill="#111"/></svg></button>
  <button class="app run" aria-label="Word"><svg width="26" height="26" viewBox="0 0 26 26"><path d="M13 4h11v18H13z" fill="#fff" stroke="#2b579a"/><path d="M15 8h7M15 11h7M15 14h7M15 17h7" stroke="#2b579a" stroke-width="1.500"/><path d="M1 4l14-3v24L1 22z" fill="#2b579a"/><text x="2" y="18" font-family="Liberation Sans, sans-serif" font-size="12" font-weight="700" fill="#fff">W</text></svg></button>
  <button class="app run" aria-label="Ansys"><svg width="28" height="28" viewBox="0 0 28 28"><path d="M1 2q13-4 26 0v24q-13 3-26 0z" fill="#f4c420"/><path d="M11 2h6l9 24h-7l-5-16-5 16H2z" fill="#181818"/></svg></button>
  <button class="app act" aria-label="DesignModeler"><svg width="22" height="20" viewBox="0 0 22 20"><path d="M3 3l4-2 4 2 4-2 4 2 2 7-2 7-4 2-4-1-4 1-4-2-2-7z" fill="#18c828" stroke="#087018" stroke-width=".6"/><text x="2" y="14" font-family="Liberation Sans, sans-serif" font-size="11" font-weight="700" fill="#fff" stroke="#063" stroke-width=".4">DM</text></svg></button>
  <button class="app run" aria-label="Contours"><svg width="28" height="24" viewBox="0 0 28 24"><path d="M1 1h26v21H1z" fill="#d8d8d8" stroke="#000" stroke-width="2"/><path d="M3 3h22v17H3z" fill="#000"/><path d="M3 9Q8 2 25 6v10Q14 20 10 16z" fill="#30d8a0"/><path d="M6 7q9-4 19 0v8q-9 4-15 1l2-4z" fill="#90e828"/><path d="M12 9q6-2 13-1v5q-6 4-12 2z" fill="#f0e820"/><path d="M17 10h8v3q-5 2-8 0z" fill="#e82810"/><circle cx="8" cy="12" r="4" fill="#000"/></svg></button>
  <button class="app run" aria-label="Results"><svg width="28" height="28" viewBox="0 0 28 28"><path d="M1 1h26v26H1z" fill="#182878"/><path d="M3 9q0-4 4-5l5 1v3q-4 0-4 3v16H3z" fill="#f09040"/><path d="M9 11q0-3 3-3v19H9z" fill="#a050d0"/><path d="M13 12h3v15h-3z" fill="#38c8d0"/><path d="M17 14h3v13h-3z" fill="#e84888"/><path d="M3 1h10l-2 5-5-1z" fill="#28a838"/><path d="M12 5l6-4v9z" fill="#e02020"/><path d="M18 10V1q7 2 8 9z" fill="#3050f0"/><path d="M15 10h11q-2 7-7 5z" fill="#e8d020"/></svg></button>
  <button class="app run" aria-label="Calculator"><svg width="22" height="26" viewBox="0 0 22 26"><path d="M2 1h18v24H2z" fill="#b8d8f0" stroke="#98bcd8"/><path d="M4 4h14v5H4z" fill="#eef8ff" stroke="#88a"/><path d="M4 13h14M4 17h14M4 21h14" stroke="#fff" stroke-width="2.500" stroke-dasharray="3 1"/></svg></button>
  <button class="app run" aria-label="OBS"><svg width="26" height="26" viewBox="0 0 26 26"><circle cx="13" cy="13" r="11.500" fill="#262626" stroke="#111"/><path d="M10 4q-4 5 2 8M21 12q-5-5-9 1M8 21q7 0 5-7" fill="none" stroke="#ccc" stroke-width="2.500"/></svg></button>
  <button class="app run" aria-label="PDF"><svg width="28" height="28" viewBox="0 0 28 28"><path d="M1 1h26v26H1z" fill="#f08418"/><path d="M4 14L17 3h7v10h-4M4 14v11h20" fill="none" stroke="#fff" stroke-width="1.200"/><path d="M5 12Q11 2 15 3q-2 5 0 8-6-2-10 1z" fill="#fff"/><text x="5" y="23" font-family="Liberation Sans, sans-serif" font-size="10" font-weight="700" fill="#fff">PDF</text></svg></button>

  <div class="d-flex align-items-center ms-auto">
    <svg class="netmon" viewBox="0 0 86 30" font-family="DejaVu Sans Condensed, sans-serif" font-size="8"><path d="M28 0h58v30H28z" fill="#f2f2f2"/><text x="4" y="8" fill="#777">D: 0</text><text x="4" y="18" fill="#a01830">U: 83</text><path d="M33.500 30V5M43.500 30V12M70 30v-5" stroke="#486030"/><path d="M8 30V20M11 30V21M13 30V20M32 30v-6M45 30v-4M75 30v-4M79 30v-8" stroke="#a81818" stroke-width="1.500"/><path d="M15 30v-5M18 30v-4M35 30v-5M47 30v-3M56 30v-5M61 30v-2M77 30v-4" stroke="#e89020" stroke-width="2"/></svg>
    <svg width="10" height="10" class="ms-1"><path d="M2 4l2-2 2 2M2 8l2-2 2 2" fill="none" stroke="#111"/></svg>
    <svg width="16" height="14" class="ms-2"><path d="M2 12Q3 2 14 2L11 8 7 9l-2 4z" fill="#eee" stroke="#999"/></svg>
    <span class="lang ms-1">En</span>
    <svg width="16" height="14" class="ms-1"><path d="M1 5h3l4-4v12l-4-4H1z" fill="#f4f4f4" stroke="#888"/><path d="M10 4q2 3 0 6M13 3q3 4 0 8" stroke="#999" fill="none"/></svg>
    <svg width="16" height="16" class="ms-1"><path d="M1.500 2.500h6v6h-6zM6.500 3.500h8v7h-8z" fill="#ddd" stroke="#888"/><path d="M4 9v4h9v-2" stroke="#777" fill="none"/></svg>
    <div class="clock text-center">19:11<br>14.04.2020</div>
    <svg width="14" height="12"><path d="M1 2h11v8H1z" fill="#3878e0"/><path d="M1 2h11L3 8z" fill="#70a8f8"/></svg>
  </div>
</footer>
<script src="https://cdn.jsdelivr.net/npm/bootstrap@5.3.0/dist/js/bootstrap.bundle.min.js"></script>
</body>
</html>
